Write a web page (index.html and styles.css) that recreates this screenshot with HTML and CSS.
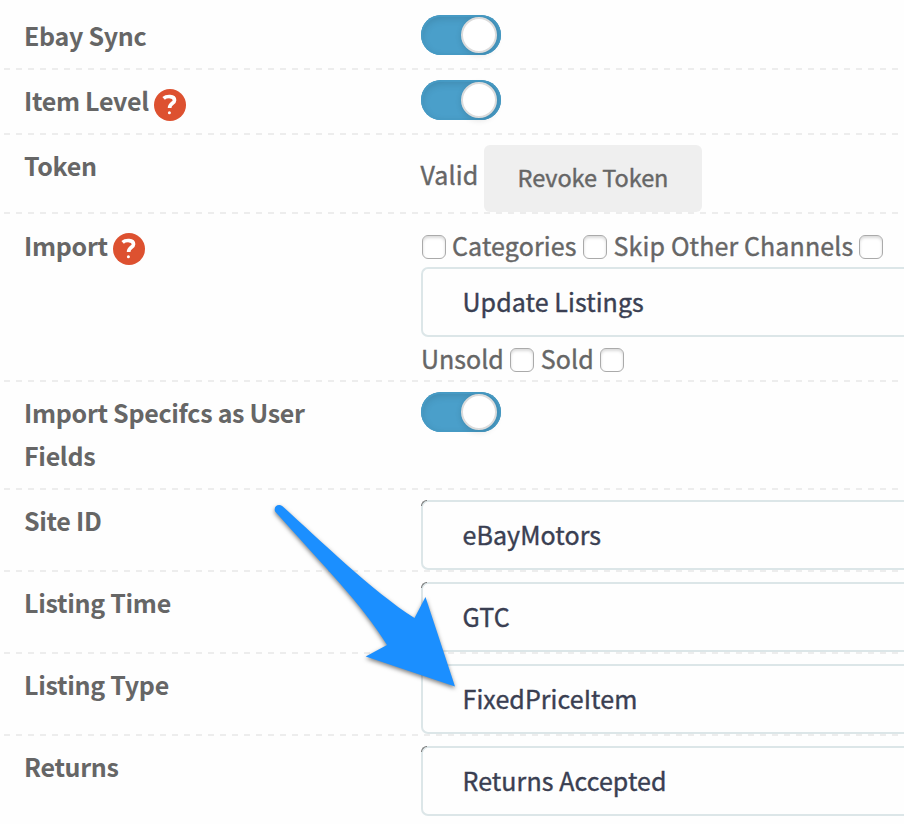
FILE: index.html
```html
<!DOCTYPE html>
<html lang="en">
<head>
<meta charset="utf-8">
<title>Ebay Settings</title>
<link rel="stylesheet" href="styles.css">
</head>
<body>
<svg class="defs" width="0" height="0" aria-hidden="true">
  <symbol id="help" viewBox="0 0 32 32">
    <circle cx="16" cy="16" r="16" fill="#dd5130"/>
    <path d="M9.600 9.400C12.500 6.800 20.500 6.500 20.500 11.200C20.500 14.400 15.600 14.400 15.600 19" fill="none" stroke="#fff" stroke-width="3.7"/>
    <circle cx="15.4" cy="23.800" r="1.500" fill="#fff"/>
  </symbol>
</svg>
<main class="settings">
  <div class="row">
    <div class="label">Ebay Sync</div>
    <div class="value"><span class="toggle"></span></div>
  </div>
  <div class="row">
    <div class="label">Item Level<svg class="help"><use href="#help"/></svg></div>
    <div class="value"><span class="toggle"></span></div>
  </div>
  <div class="row">
    <div class="label">Token</div>
    <div class="value token"><span class="valid">Valid</span><button class="button">Revoke Token</button></div>
  </div>
  <div class="row">
    <div class="label">Import<svg class="help"><use href="#help"/></svg></div>
    <div class="value import">
      <div class="checks">
        <input type="checkbox" class="check"><span class="categories">Categories</span>
        <input type="checkbox" class="check"><span class="skip">Skip Other Channels</span>
        <input type="checkbox" class="check">
      </div>
      <div class="select">Update Listings</div>
      <div class="checks lower">
        <span class="unsold">Unsold</span><input type="checkbox" class="check">
        <span class="sold">Sold</span><input type="checkbox" class="check">
      </div>
    </div>
  </div>
  <div class="row">
    <div class="label">Import Specifcs as User Fields</div>
    <div class="value"><span class="toggle"></span></div>
  </div>
  <div class="row">
    <div class="label">Site ID</div>
    <div class="value"><div class="select dark-corner">eBayMotors</div></div>
  </div>
  <div class="row">
    <div class="label">Listing Time</div>
    <div class="value"><div class="select dark-corner">GTC</div></div>
  </div>
  <div class="row">
    <div class="label">Listing Type</div>
    <div class="value"><div class="select">FixedPriceItem</div></div>
  </div>
  <div class="row last">
    <div class="label">Returns</div>
    <div class="value"><div class="select dark-corner">Returns Accepted</div></div>
  </div>
</main>
<svg class="arrow" width="200" height="200" viewBox="265 500 200 200" aria-hidden="true">
  <path d="M275.3 511.7C273 507.500 277.500 503 282.500 506.200C320 540 372 591 414.500 618L425.500 597L455 686.500L365.700 656.500L387 645C363 605 320 562 275.300 511.700Z" fill="#1b8fff"/>
</svg>
</body>
</html>
```

FILE: styles.css
```css
*,
*::before {
  box-sizing: border-box;
}

body {
  margin: 0;
  width: 904px;
  height: 824px;
  overflow: hidden;
  position: relative;
  background: #fefefe;
  color: #666;
  font: 25px/43px "Noto Sans CJK SC", "Noto Sans", sans-serif;
  -webkit-text-stroke: .4px;
}

.defs {
  position: absolute;
}

.settings {
  padding: 5px 0 0 4px;
}

.row {
  display: flex;
  padding: 10px 0 10px 20px;
  background: repeating-linear-gradient(90deg, #ededed 0 6px, transparent 6px 12px) left bottom / 894px 2px no-repeat;
}

.label {
  flex: 0 0 397px;
  margin-top: -1px;
  padding-right: 80px;
  height: 43px;
  font-weight: 700;
  letter-spacing: -.3px;
  -webkit-text-stroke: 0;
}

.row:nth-child(4) .label {
  margin-top: 0;
}

.row:nth-child(5) .label {
  height: 88px;
}

.row:nth-child(-n+2) {
  height: 65px;
}

.row:nth-child(3) {
  height: 79px;
}

.row:nth-child(4) {
  height: 168px;
}

.row:nth-child(5) {
  height: 108px;
}

.row:nth-child(n+6) {
  height: 82px;
}

.last {
  background: none;
}

.value {
  flex: 1;
  min-width: 0;
}

.help {
  width: 32px;
  height: 32px;
  margin-left: 5.4px;
  vertical-align: -10px;
}

.row:nth-child(4) .help {
  vertical-align: -9px;
}

.toggle {
  display: flex;
  justify-content: flex-end;
  width: 80px;
  height: 40px;
  padding: 2px 4px;
  border-radius: 20px;
  background: #4a9fca;
  box-shadow: inset 0 0 0 2px #469ac4, inset 0 3px 8px rgba(0, 0, 0, .15);
}

.toggle::before {
  content: "";
  width: 36px;
  height: 36px;
  border: 2px solid #dcdcdc;
  border-radius: 50%;
  background: #fff;
  box-shadow: 0 2px 6px rgba(0, 0, 0, .12);
}

.token {
  display: flex;
}

.valid {
  width: 63.5px;
  margin: 8px 0 0 -.5px;
  letter-spacing: .1px;
}

.button {
  width: 218px;
  height: 67px;
  padding: 0 0 3px;
  border: 0;
  border-radius: 6px;
  background: #efefef;
  color: #666;
  font: inherit;
  font-size: 23.5px;
  letter-spacing: -.05px;
}

.checks {
  display: flex;
  align-items: center;
  height: 43px;
  gap: 6px;
  padding-left: 1px;
  white-space: nowrap;
}

.categories {
  letter-spacing: .13px;
}

.skip,
.sold {
  margin-left: 1px;
  letter-spacing: .13px;
}

.check {
  appearance: none;
  flex: none;
  width: 24px;
  height: 24px;
  margin: 3px 0 0;
  border: 1px solid #aaa;
  border-radius: 6px;
  background: #fff;
  box-shadow: inset 0 2px 3px rgba(0, 0, 0, .15);
}

.select {
  position: relative;
  height: 70px;
  padding: 0 39.5px;
  border: 2px solid #dce6e8;
  border-right: 0;
  border-radius: 7px 0 0 7px;
  color: #3a3f52;
  line-height: 64px;
  letter-spacing: .08px;
}

.dark-corner::before {
  content: "";
  position: absolute;
  left: -2px;
  top: -2px;
  width: 6px;
  height: 6px;
  border: solid #777;
  border-width: 1px 0 0 1px;
  border-radius: 6px 0 0 0;
}

.lower {
  padding-left: 0;
}

.arrow {
  position: absolute;
  left: 265px;
  top: 500px;
  filter: drop-shadow(0 2px 2px rgba(0, 0, 0, .5));
}
```
